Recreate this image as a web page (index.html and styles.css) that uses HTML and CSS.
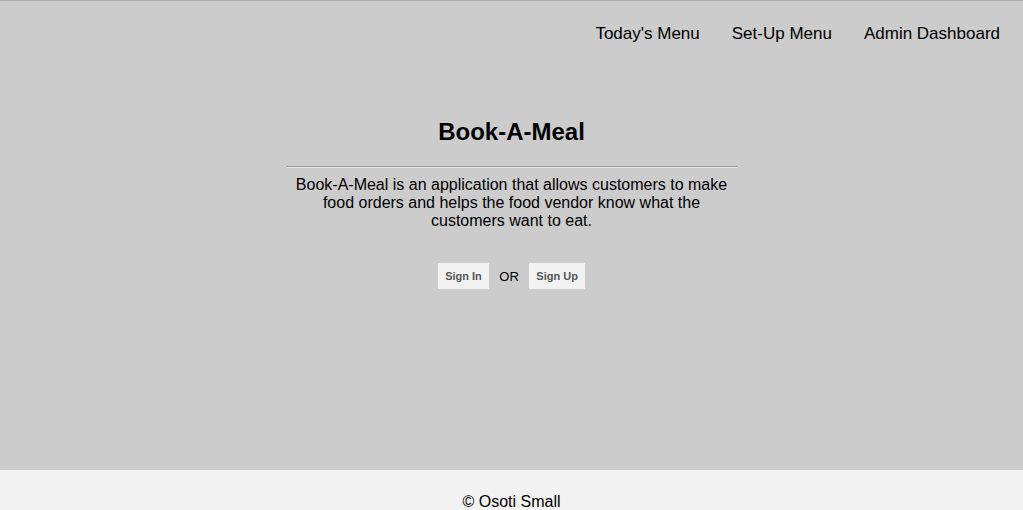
FILE: index.html
```html
<!DOCTYPE html>
<html lang="en">
<head>
<meta charset="utf-8">
<title>Book-A-Meal</title>
<link rel="stylesheet" href="styles.css">
</head>
<body>
<div class="page">
  <header class="header">
    <nav class="nav">
      <a class="nav-link" href="#">Today's Menu</a>
      <a class="nav-link" href="#">Set-Up Menu</a>
      <a class="nav-link" href="#">Admin Dashboard</a>
    </nav>
  </header>
  <main class="main">
    <section class="intro">
      <h1 class="title">Book-A-Meal</h1>
      <hr class="divider">
      <p class="desc">Book-A-Meal is an application that allows customers to make food orders and helps the food vendor know what the customers want to eat.</p>
      <div class="actions">
        <button class="btn">Sign In</button>
        <span class="or">OR</span>
        <button class="btn">Sign Up</button>
      </div>
    </section>
  </main>
</div>
<footer class="footer">© Osoti Small</footer>
</body>
</html>
```

FILE: styles.css
```css
html, body {
  margin: 0;
  padding: 0;
}
body {
  font-family: "Liberation Sans", Arial, sans-serif;
  color: #000;
  background: #f2f2f2;
}
.page {
  background: #cccccc;
  border-top: 1px solid #aaaaaa;
  min-height: 469px;
  display: flex;
  flex-direction: column;
}
.header {
  padding: 23px 23px 0 0;
  display: flex;
  justify-content: flex-end;
}
.nav {
  display: flex;
  gap: 32px;
}
.nav-link {
  font-size: 17px;
  line-height: 20px;
  color: #000;
  text-decoration: none;
}
.main {
  flex: 1;
  display: flex;
  justify-content: center;
}
.intro {
  width: 450px;
  text-align: center;
}
.title {
  margin: 74px 0 0;
  font-size: 24px;
  line-height: 28px;
  font-weight: bold;
}
.divider {
  margin: 20px 0 0;
  border: 0;
  border-top: 1px solid #9a9a9a;
  border-bottom: 1px solid #e6e6e6;
  height: 0;
}
.desc {
  margin: 8px 0 0;
  font-size: 16px;
  line-height: 18px;
  padding: 0 8px;
}
.actions {
  margin-top: 33px;
  display: flex;
  justify-content: center;
  align-items: center;
  gap: 10px;
}
.btn {
  font-family: "Liberation Sans", Arial, sans-serif;
  font-size: 11px;
  font-weight: bold;
  line-height: 14px;
  color: #555555;
  background: #f2f2f2;
  border: 0;
  padding: 6px 7.5px;
  margin: 0;
}
.or {
  font-size: 13px;
  line-height: 15px;
}
.footer {
  background: #f2f2f2;
  text-align: center;
  font-size: 16px;
  line-height: 18px;
  padding: 23px 0 21px;
}
```
